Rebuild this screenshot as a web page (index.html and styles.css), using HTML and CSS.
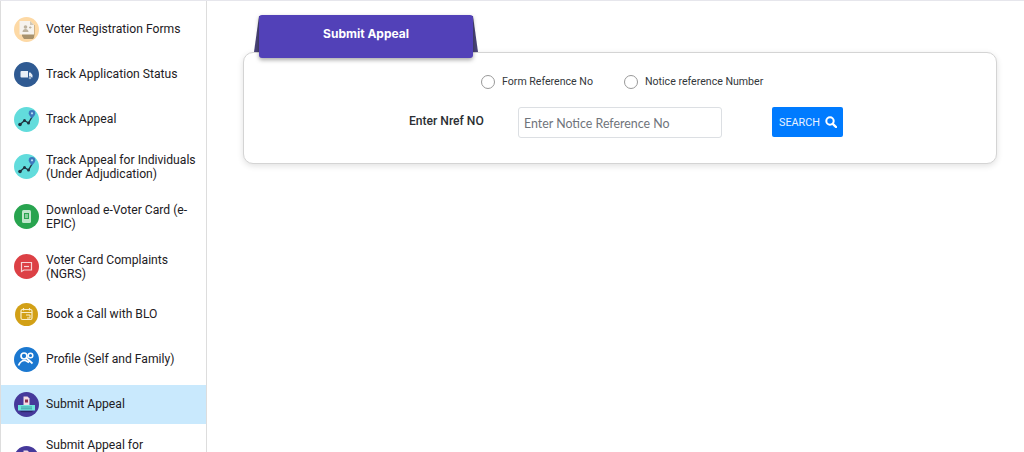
FILE: index.html
```html
<!DOCTYPE html>
<html lang="en">
<head>
    <meta charset="UTF-8">
    <meta name="viewport" content="width=device-width, initial-scale=1.0">
    <title>Submit Appeal</title>
    <link rel="stylesheet" href="styles.css">
</head>
<body>
    <div class="page">
        <!-- Left menu -->
        <nav class="sidebar">
            <a class="menu-item">
                <svg class="menu-icon" viewBox="0 0 25 25"><circle cx="12.500" cy="12.500" r="12.500" fill="#fdd9a5"/><path d="M8 8h12.500v9.500l-.5 3-1 1.500H10l-2-3z" fill="#a8926c"/><path d="M5.500 4h10.500l4 4v9.500H5.500z" fill="#f6f3ee"/><path d="M16 4l4 4h-4z" fill="#cfc7b8"/><circle cx="11.500" cy="10" r="1.800" fill="#bdb39f"/><path d="M8.500 15c0-2 1.500-3 3-3s3 1 3 3z" fill="#bdb39f"/><path d="M15 10.500h2.500M16.200 9.300v2.400" stroke="#bdb39f"/></svg>
                <span>Voter Registration Forms</span>
            </a>
            <a class="menu-item">
                <svg class="menu-icon" viewBox="0 0 25 25"><circle cx="12.500" cy="12.500" r="12.500" fill="#2f5a92"/><path d="M7.500 9h6.500v6.500H7.500a1 1 0 0 1-1-1V10a1 1 0 0 1 1-1z" fill="#e8eef6"/><path d="M15 10.500h1.500l2 2.500v2.500H15z" fill="#e8eef6"/><circle cx="16" cy="16" r="1.300" fill="#e8eef6" stroke="#2f5a92" stroke-width=".7"/></svg>
                <span>Track Application Status</span>
            </a>
            <a class="menu-item">
                <svg class="menu-icon" viewBox="0 0 25 25"><use href="#track"/></svg>
                <span>Track Appeal</span>
            </a>
            <a class="menu-item">
                <svg class="menu-icon" viewBox="0 0 25 25"><use href="#track"/></svg>
                <span>Track Appeal for Individuals (Under Adjudication)</span>
            </a>
            <a class="menu-item">
                <svg class="menu-icon" viewBox="0 0 25 25"><circle cx="12.500" cy="12.500" r="12.500" fill="#28a44f"/><rect x="8" y="6" width="9" height="13" rx="1.500" fill="#bfe6cb"/><rect x="10" y="9" width="5" height="6" fill="#28a44f"/><rect x="11" y="10.500" width="3" height="1" fill="#e6f6eb"/><rect x="11" y="12.500" width="3" height="1" fill="#e6f6eb"/></svg>
                <span>Download e-Voter Card (e-EPIC)</span>
            </a>
            <a class="menu-item">
                <svg class="menu-icon" viewBox="0 0 25 25"><circle cx="12.500" cy="12.500" r="12.500" fill="#dc4045"/><path d="M7.500 8.500h10v7.500h-7.500l-2.500 1.500z" fill="none" stroke="#f7d5d6" stroke-width="1.200"/><path d="M10 12.500h5" stroke="#f7d5d6" stroke-width="1.200"/></svg>
                <span>Voter Card Complaints (NGRS)</span>
            </a>
            <a class="menu-item">
                <svg class="menu-icon" viewBox="0 0 25 25"><circle cx="12.500" cy="12.500" r="11.500" fill="#d2a016"/><rect x="7" y="7.500" width="11" height="10" rx="1.500" fill="none" stroke="#f9eecb" stroke-width="1.200"/><path d="M7 10.500h11M9.500 6v2.500M15.500 6v2.500" stroke="#f9eecb" stroke-width="1.200"/><path d="M12 13h4v3h-3" fill="none" stroke="#f9eecb"/></svg>
                <span>Book a Call with BLO</span>
            </a>
            <a class="menu-item">
                <svg class="menu-icon" viewBox="0 0 25 25"><circle cx="12.500" cy="12.500" r="12.500" fill="#1b78d0"/><circle cx="10" cy="9" r="3" fill="none" stroke="#fff" stroke-width="1.700"/><circle cx="16.500" cy="8.500" r="2.300" fill="none" stroke="#fff" stroke-width="1.500"/><path d="M4.500 18.500c1.500-3.500 3.500-5 6-5h1l3.500 2M12.500 11l6 5.500" fill="none" stroke="#fff" stroke-width="1.700"/></svg>
                <span>Profile (Self and Family)</span>
            </a>
            <a class="menu-item active">
                <svg class="menu-icon" viewBox="0 0 25 25"><use href="#appeal"/></svg>
                <span>Submit Appeal</span>
            </a>
            <a class="menu-item last">
                <svg class="menu-icon" viewBox="0 0 25 25"><use href="#appeal"/></svg>
                <span>Submit Appeal for</span>
            </a>
        </nav>

        <main class="content">
            <div class="tab-wrap">
                <div class="tab">Submit Appeal</div>
            </div>
            <div class="card">
                <div class="radio-row">
                    <label class="radio-label"><input type="radio" name="ref" class="radio">Form Reference No</label>
                    <label class="radio-label"><input type="radio" name="ref" class="radio">Notice reference Number</label>
                </div>
                <div class="search-row">
                    <label class="field-label" for="nref">Enter Nref NO</label>
                    <input id="nref" class="field" type="text" placeholder="Enter Notice Reference No">
                    <button class="search-btn" type="button">SEARCH
                        <svg class="search-icon" viewBox="0 0 12 12"><circle cx="5" cy="5" r="3.700" fill="none" stroke="#fff" stroke-width="2"/><path d="M7.800 7.800L11 11" stroke="#fff" stroke-width="2.400" stroke-linecap="round"/></svg>
                    </button>
                </div>
            </div>
        </main>
    </div>

    <!-- Icons used more than once -->
    <svg class="defs" aria-hidden="true">
        <symbol id="track" viewBox="0 0 25 25">
            <circle cx="12.500" cy="12.500" r="12.500" fill="#62dcdc"/>
            <path d="M6 17.500l4.500-4 4 2.500 3.500-6" fill="none" stroke="#1f3340" stroke-width="1.400"/>
            <circle cx="6" cy="17.500" r="1.800" fill="#1f3340"/>
            <circle cx="10.500" cy="13.500" r="1.500" fill="#1f3340"/>
            <circle cx="14.500" cy="16" r="1.500" fill="#1f3340"/>
            <path d="M18 11.500c-2.300-2.500-3.300-3.800-3.300-5.200a3.300 3.300 0 0 1 6.600 0c0 1.400-1 2.700-3.300 5.200z" fill="#3d78bd"/>
            <circle cx="18" cy="6.300" r="1.100" fill="#b8e0f5"/>
        </symbol>
        <symbol id="appeal" viewBox="0 0 25 25">
            <circle cx="12.500" cy="12.500" r="12.500" fill="#46399b"/>
            <path d="M9.500 4.500h4l2 2v7h-6z" fill="#f3dbe3"/>
            <rect x="11" y="7.500" width="3" height="3" fill="#8d2c4c"/>
            <rect x="4" y="13" width="17" height="5.500" fill="#6fe6dc"/>
            <path d="M7 15h11M7 16.800h11" stroke="#2f7f8f" stroke-width=".7"/>
            <rect x="6.500" y="19" width="12" height="1.200" fill="#2b2468"/>
        </symbol>
    </svg>
</body>
</html>
```

FILE: styles.css
```css
* {
    box-sizing: border-box;
}
html, body {
    height: 100%;
}
body {
    margin: 0;
    overflow: hidden;
    background: #fff;
    color: #212529;
    font-family: Roboto, "Liberation Sans", sans-serif;
}
.page {
    display: flex;
    height: 452px;
    border-top: 1px solid #e6e6ec;
    overflow: hidden;
}
.defs {
    display: none;
}

/* Left menu */
.sidebar {
    flex: 0 0 207px;
    display: flex;
    flex-direction: column;
    gap: 6px;
    padding-top: 8.500px;
    border-left: 1px solid #ddd;
    border-right: 1px solid #ddd;
}
.menu-item {
    flex: none;
    display: flex;
    align-items: center;
    gap: 7px;
    min-height: 39px;
    padding: 0 6px 0 13px;
    font-size: 12.150px;
    line-height: 14px;
    color: #1d2024;
}
.menu-item span {
    padding: 8px 0;
}
/* the window ends inside this row, only its first line shows */
.menu-item.last span {
    padding-bottom: 36px;
}
.menu-item.active {
    background: #c9e9fd;
}
.menu-icon {
    flex: none;
    width: 25px;
    height: 25px;
}

/* Main area */
.content {
    flex: 1;
    display: flex;
    flex-direction: column;
    align-items: flex-start;
    padding: 14px 27px 0 36px;
}
.tab-wrap {
    position: relative;
    z-index: 2;
    margin-left: 16px;
    margin-bottom: -6px;
}
/* dark folded corners behind the tab */
.tab-wrap::before {
    content: "";
    position: absolute;
    top: 1px;
    left: -5px;
    right: -5px;
    height: 36px;
    background: #4a4478;
    clip-path: polygon(5px 0, calc(100% - 5px) 0, 100% 100%, 0 100%);
}
.tab {
    position: relative;
    width: 214px;
    height: 43px;
    border-radius: 3px;
    background: #5241b8;
    box-shadow: 0 2px 4px rgba(0, 0, 0, .35);
    color: #fff;
    font-family: Inter, "Open Sans", sans-serif;
    font-size: 12px;
    font-weight: 700;
    line-height: 37px;
    text-align: center;
}
.card {
    position: relative;
    align-self: stretch;
    height: 112px;
    border: 1px solid #d4d4d4;
    border-radius: 10px;
    background: #fff;
    box-shadow: 0 2px 6px rgba(0, 0, 0, .12);
}
.radio-row {
    display: flex;
    gap: 31px;
    height: 15px;
    margin: 21px 0 0 237px;
}
.radio-label {
    display: flex;
    align-items: center;
    gap: 7px;
    font-size: 10.600px;
    color: #33373b;
}
.radio {
    appearance: none;
    width: 14px;
    height: 14px;
    margin: 0;
    border: 1.500px solid #999;
    border-radius: 50%;
    background: #fff;
}
.search-row {
    display: flex;
    align-items: flex-start;
    margin: 18px 0 0 165px;
}
.field-label {
    width: 109px;
    padding-top: 7px;
    font-size: 12.100px;
    font-weight: 500;
    line-height: 15px;
    color: #2b2f33;
}
.field {
    width: 204px;
    height: 31px;
    padding: 2px 5px 0;
    border: 1px solid #dcdfe3;
    border-radius: 3px;
    color: #495057;
    font-family: Lato, "Noto Sans", sans-serif;
    font-size: 12.400px;
}
.field::placeholder {
    color: #6f747b;
    opacity: 1;
}
.search-btn {
    display: flex;
    align-items: center;
    gap: 5px;
    width: 71px;
    height: 30px;
    margin-left: 50px;
    padding: 0 0 0 7px;
    border: 0;
    border-radius: 2px;
    background: #007bff;
    color: #e8f2ff;
    font-family: Roboto, sans-serif;
    font-size: 10.800px;
}
.search-icon {
    width: 12px;
    height: 12px;
}
```
